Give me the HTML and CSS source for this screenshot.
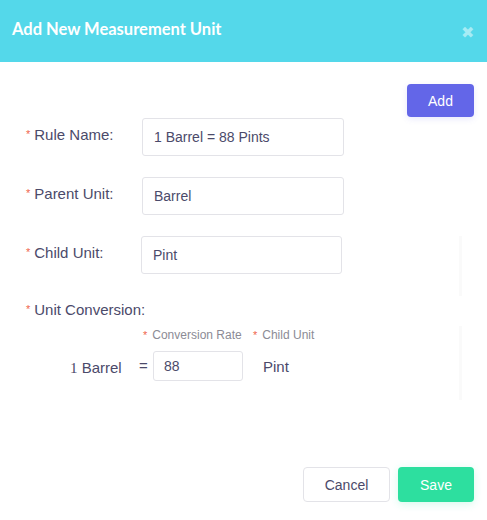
FILE: index.html
```html
<!DOCTYPE html>
<html>
<head>
<meta charset="utf-8">
<link rel="stylesheet" href="styles.css">
</head>
<body>
<div class="modal">
  <div class="header">
    <span class="title">Add New Measurement Unit</span>
    <span class="close">✖</span>
  </div>
  <div class="body">
    <div class="add-row"><button class="btn-add">Add</button></div>
    <div class="row">
      <label class="label"><span class="star">*</span>Rule Name:</label>
      <div class="input w202">1 Barrel = 88 Pints</div>
    </div>
    <div class="row">
      <label class="label"><span class="star">*</span>Parent Unit:</label>
      <div class="input w202">Barrel</div>
    </div>
    <div class="row">
      <label class="label"><span class="star">*</span>Child Unit:</label>
      <div class="input w200 shift">Pint</div>
    </div>
    <div class="row conv-label">
      <label class="label"><span class="star">*</span>Unit Conversion:</label>
    </div>
    <div class="sub-labels">
      <span class="sub rate"><span class="star">*</span>Conversion Rate</span>
      <span class="sub"><span class="star">*</span>Child Unit</span>
    </div>
    <div class="conv-row">
      <span class="parent"><span class="one">1</span> Barrel</span>
      <span class="eq">=</span>
      <div class="input small">88</div>
      <span class="child">Pint</span>
    </div>
    <div class="footer">
      <button class="btn-cancel">Cancel</button>
      <button class="btn-save">Save</button>
    </div>
  </div>
  <div class="vline v1"></div>
  <div class="vline v2"></div>
</div>
</body>
</html>
```

FILE: styles.css
```css
* { box-sizing: border-box; }
html, body { margin: 0; padding: 0; background: #fff; }
body { font-family: "Liberation Sans", Arial, sans-serif; color: #4b4a6a; }
.modal { position: relative; width: 487px; height: 520px; }
.header {
  height: 62px;
  background: #54d8ea;
  display: flex;
  align-items: center;
  justify-content: space-between;
  padding: 0 13px 0 12px;
}
.title { font-family: Lato, "Liberation Sans", sans-serif; font-weight: 700; font-size: 16.5px; color: #fff; margin-top: -4px; }
.close { color: #a6ecf5; font-size: 16px; margin-top: 2px; }
.body { padding: 22px 13px 0 24px; }
.add-row { display: flex; justify-content: flex-end; }
.btn-add {
  width: 67px; height: 33px; border: none; border-radius: 4px;
  background: #6366e8; color: #fff; font-family: "Liberation Sans", sans-serif; font-size: 14px;
  box-shadow: 0 2px 6px rgba(99,102,232,0.15);
}
.row { display: flex; align-items: flex-start; margin-top: 21px; }
.add-row + .row { margin-top: 1px; }
.label { width: 118px; font-size: 15px; padding-top: 8px; padding-left: 2px; color: #4b4a6a; }
.star { color: #f0664d; font-size: 11px; margin-right: 4px; vertical-align: 2px; }
.input {
  height: 38px; border: 1px solid #e3e3e8; border-radius: 3px;
  padding: 0 11px; display: flex; align-items: center;
  font-size: 14px; color: #4b4a6a;
}
.w202 { width: 202px; }
.w200 { width: 201px; margin-left: -1px; }
.conv-label { margin-top: 27px; }
.conv-label .label { width: auto; padding-top: 0; }
.sub-labels { display: flex; margin-top: 10px; padding-left: 119px; font-size: 12px; color: #8b8b95; }
.sub .star { font-size: 11px; margin-right: 5px; vertical-align: 0; }
.rate { width: 110px; }
.conv-row { display: flex; align-items: center; margin-top: 9px; height: 29px; padding-left: 46px; }
.parent { font-size: 15px; width: 69px; margin-top: 5px; }
.one { font-family: "Liberation Serif", serif; }
.eq { font-size: 15px; width: 14px; }
.input.small { height: 30px; width: 90px; padding: 0 10px; }
.child { font-size: 15px; margin-left: 20px; margin-top: 1px; }
.footer { display: flex; justify-content: flex-end; gap: 8px; margin-top: 87px; }
.btn-cancel {
  width: 87px; height: 35px; border: 1px solid #e3e3e8; border-radius: 4px;
  background: #fff; color: #4b4a6a; font-family: "Liberation Sans", sans-serif; font-size: 14px;
}
.btn-save {
  width: 76px; height: 35px; border: none; border-radius: 4px;
  background: #2ddf9f; color: #fff; font-family: "Liberation Sans", sans-serif; font-size: 14px;
  box-shadow: 0 2px 8px rgba(45,223,159,0.2);
}
.vline { position: absolute; left: 459px; width: 3px; background: #fafafa; }
.v1 { top: 236px; height: 60px; }
.v2 { top: 326px; height: 74px; }
```
